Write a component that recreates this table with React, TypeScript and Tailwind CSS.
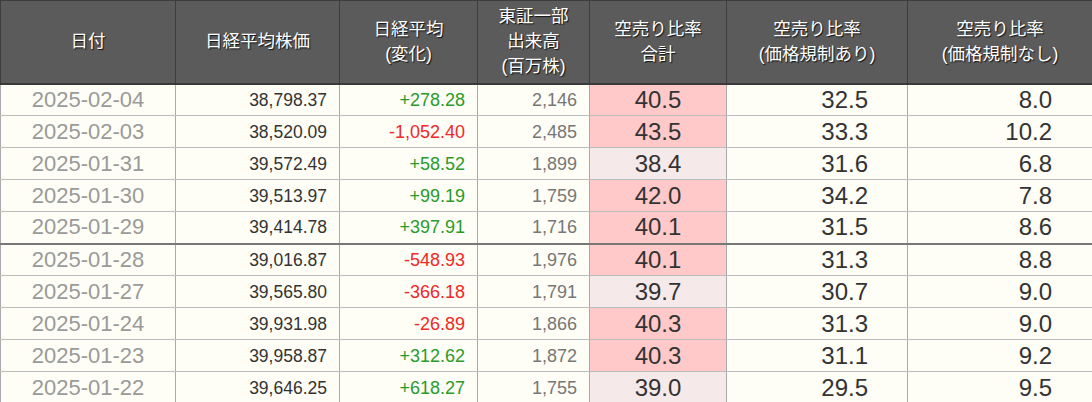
import React from 'react';

type Row = {
  date: string;
  nikkei: string;
  change: string;
  volume: string;
  total: string;
  withReg: string;
  noReg: string;
};

const rows: Row[] = [
  { date: '2025-02-04', nikkei: '38,798.37', change: '+278.28', volume: '2,146', total: '40.5', withReg: '32.5', noReg: '8.0' },
  { date: '2025-02-03', nikkei: '38,520.09', change: '-1,052.40', volume: '2,485', total: '43.5', withReg: '33.3', noReg: '10.2' },
  { date: '2025-01-31', nikkei: '39,572.49', change: '+58.52', volume: '1,899', total: '38.4', withReg: '31.6', noReg: '6.8' },
  { date: '2025-01-30', nikkei: '39,513.97', change: '+99.19', volume: '1,759', total: '42.0', withReg: '34.2', noReg: '7.8' },
  { date: '2025-01-29', nikkei: '39,414.78', change: '+397.91', volume: '1,716', total: '40.1', withReg: '31.5', noReg: '8.6' },
  { date: '2025-01-28', nikkei: '39,016.87', change: '-548.93', volume: '1,976', total: '40.1', withReg: '31.3', noReg: '8.8' },
  { date: '2025-01-27', nikkei: '39,565.80', change: '-366.18', volume: '1,791', total: '39.7', withReg: '30.7', noReg: '9.0' },
  { date: '2025-01-24', nikkei: '39,931.98', change: '-26.89', volume: '1,866', total: '40.3', withReg: '31.3', noReg: '9.0' },
  { date: '2025-01-23', nikkei: '39,958.87', change: '+312.62', volume: '1,872', total: '40.3', withReg: '31.1', noReg: '9.2' },
  { date: '2025-01-22', nikkei: '39,646.25', change: '+618.27', volume: '1,755', total: '39.0', withReg: '29.5', noReg: '9.5' },
];

const th = 'border border-[#3d3d3d] border-b-2 border-b-[#3a3a3a] px-1 font-normal text-[17.5px] leading-[25px] text-white [text-shadow:1px_1px_1px_#111] align-middle';
const td = 'border border-[#bdbdbd] border-l-[#a9a9a9] border-r-[#a9a9a9] h-[32px] p-0 leading-[30px] align-middle whitespace-nowrap';

export default function App() {
  return (
    <div className="w-[1092px] h-[402px] overflow-hidden bg-[#fefef6] font-['Liberation_Sans','Noto_Sans_CJK_JP',sans-serif]">
      <table className="w-[1092px] table-fixed border-collapse">
        <colgroup>
          <col className="w-[175px]" />
          <col className="w-[164px]" />
          <col className="w-[138px]" />
          <col className="w-[112px]" />
          <col className="w-[137px]" />
          <col className="w-[181px]" />
          <col className="w-[185px]" />
        </colgroup>
        <thead>
          <tr className="h-[83px] bg-[#5b5b5b]">
            <th className={th}>日付</th>
            <th className={th}>日経平均株価</th>
            <th className={th}>日経平均<br />(変化)</th>
            <th className={th}>東証一部<br />出来高<br />(百万株)</th>
            <th className={th}>空売り比率<br />合計</th>
            <th className={th}>空売り比率<br />(価格規制あり)</th>
            <th className={th}>空売り比率<br />(価格規制なし)</th>
          </tr>
        </thead>
        <tbody>
          {rows.map((r, i) => {
            const hot = parseFloat(r.total) >= 40;
            const up = r.change.startsWith('+');
            return (
              <tr key={r.date} className={i === 5 ? 'border-t-2 border-t-[#777]' : ''}>
                <td className={`${td} text-center text-[22px] text-[#9a9a9a]`}>{r.date}</td>
                <td className={`${td} text-right pr-3 text-[17.5px] text-[#333]`}>{r.nikkei}</td>
                <td className={`${td} text-right pr-3 text-[18px] ${up ? 'text-[#2a9a2a]' : 'text-[#f02828]'}`}>{r.change}</td>
                <td className={`${td} text-right pr-3 text-[18px] text-[#777]`}>{r.volume}</td>
                <td className={`${td} text-center text-[24px] text-[#333] ${hot ? 'bg-[#ffc9c9]' : 'bg-[#f6e9ea]'}`}>{r.total}</td>
                <td className={`${td} text-right pr-[39px] text-[24px] text-[#333]`}>{r.withReg}</td>
                <td className={`${td} text-right pr-[40px] text-[24px] text-[#333]`}>{r.noReg}</td>
              </tr>
            );
          })}
        </tbody>
      </table>
    </div>
  );
}
